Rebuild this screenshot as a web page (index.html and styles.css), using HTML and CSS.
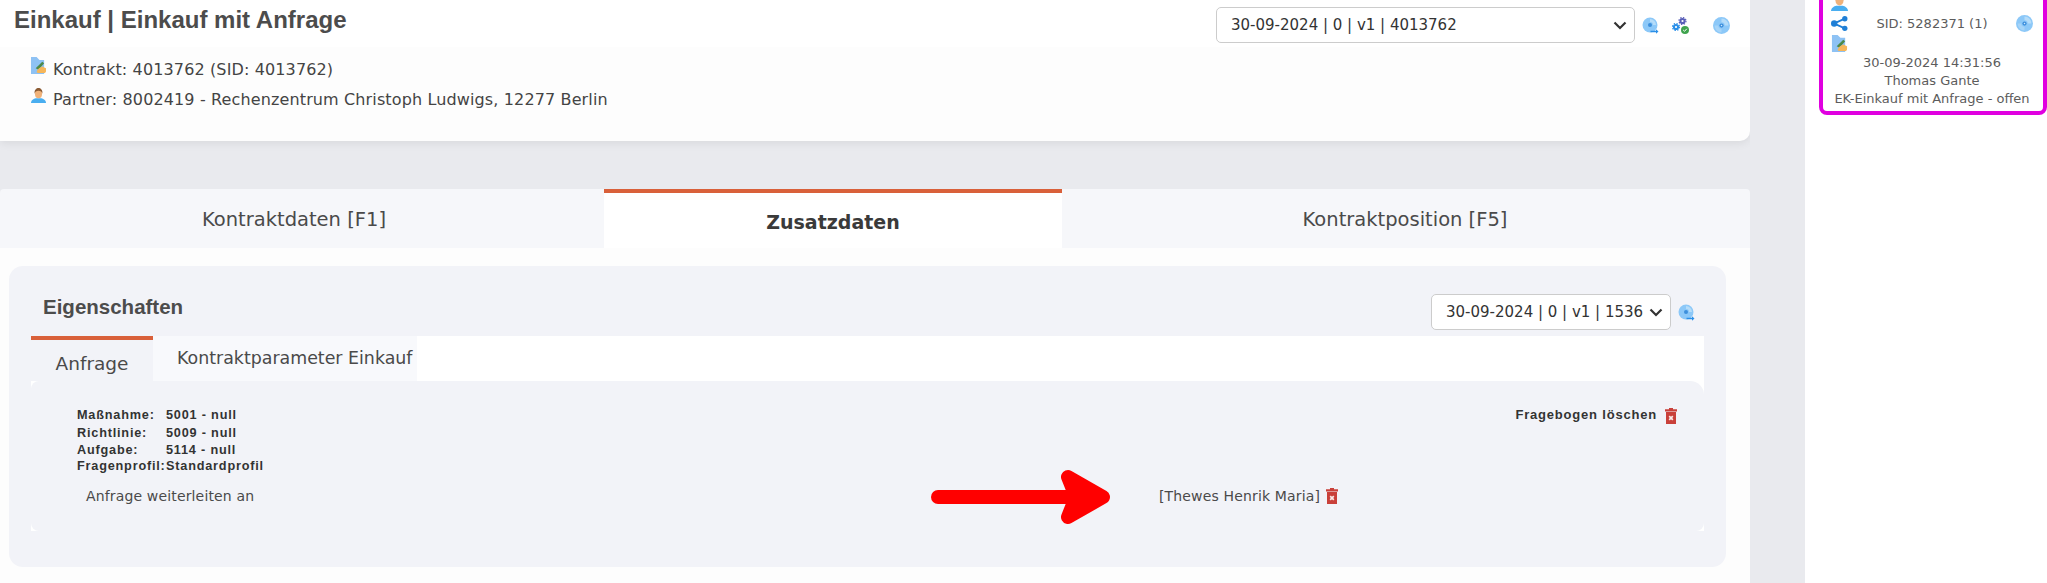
FILE: index.html
```html
<!DOCTYPE html>
<html lang="de">
<head>
    <meta charset="UTF-8">
    <title>Einkauf mit Anfrage</title>
    <link rel="stylesheet" href="styles.css">
</head>
<body>
    <svg class="sprites" width="0" height="0">
        <symbol id="ic-disc" viewBox="0 0 16 16">
            <circle cx="8" cy="8" r="8" fill="#8cc8f8"/>
            <path d="M8 1.500a6.500 6.500 0 0 1 6.500 6.500h-3.500a3 3 0 0 0-3-3z" fill="#b5dcf9"/>
            <path d="M8 14.500a6.500 6.500 0 0 1-6.500-6.500h3.500a3 3 0 0 0 3 3z" fill="#a6d4f8"/>
            <circle cx="8" cy="8" r="2" fill="#3d8fdc"/>
            <circle cx="8" cy="8" r=".7" fill="#cfe8fb"/>
        </symbol>
        <symbol id="ic-disc-go" viewBox="0 0 16 17">
            <circle cx="7.500" cy="8" r="7.500" fill="#8cc8f8"/>
            <path d="M7.500 2a6 6 0 0 1 6 6h-3a3 3 0 0 0-3-3z" fill="#b5dcf9"/>
            <circle cx="7.500" cy="8" r="2" fill="#3d8fdc"/>
            <path d="M8 13.700h5.500v-1.500l2.500 2.300-2.500 2.200v-1.500H8z" fill="#2a8fe8"/>
        </symbol>
        <symbol id="ic-gears" viewBox="0 0 17 17">
            <circle cx="10.500" cy="4" r="2.100" fill="none" stroke="#5a5fb8" stroke-width="2"/>
            <circle cx="10.500" cy="4" r="3.500" fill="none" stroke="#5a5fb8" stroke-width="1.200" stroke-dasharray="1.400 1.350"/>
            <circle cx="4" cy="10" r="2.100" fill="none" stroke="#2a8fe8" stroke-width="2"/>
            <circle cx="4" cy="10" r="3.500" fill="none" stroke="#2a8fe8" stroke-width="1.200" stroke-dasharray="1.400 1.350"/>
            <circle cx="13" cy="13" r="4" fill="#3fa34d"/>
            <path d="M11.200 13l1.300 1.300 2.300-2.500" fill="none" stroke="#fff" stroke-width="1"/>
        </symbol>
        <symbol id="ic-contract" viewBox="0 0 16 18">
            <path d="M0 0h6l3 3h5v15H0z" fill="#8ec2f4"/>
            <path d="M5 12l7-7 2 1.500-6 7z" fill="#4d8a4a"/>
            <path d="M6 16c1-4 4-5 6-6l4 2v3c0 1-1 2-2 2H7z" fill="#f6b65a"/>
        </symbol>
        <symbol id="ic-person" viewBox="0 0 16 16">
            <path d="M0 16c0-3 3-4.500 5-5h6c2 .5 5 2 5 5z" fill="#49aef0"/>
            <ellipse cx="8" cy="6" rx="3.800" ry="4.800" fill="#f0b27a"/>
            <path d="M4 6c-1-4 2-6 4-6s5 2 4 6c-.5-2-1.500-3-4-3S4.500 4 4 6z" fill="#8a5a32"/>
        </symbol>
        <symbol id="ic-trash" viewBox="0 0 12 16">
            <path d="M4 0h4v1.200h4V3.500H0V1.200h4z" fill="#c9403a"/>
            <path d="M1 4h10v12H1z" fill="#c9403a"/>
            <path d="M4.200 8.200l3.600 3.600M7.800 8.200l-3.600 3.600" stroke="#fbe9e7" stroke-width="1.700"/>
        </symbol>
        <symbol id="ic-share" viewBox="0 0 16 14">
            <path d="M13 2.500 3 7l10 4.500" fill="none" stroke="#1f7fd6" stroke-width="1.800"/>
            <circle cx="13" cy="2.500" r="2.500" fill="#1f7fd6"/>
            <circle cx="3" cy="7" r="3" fill="#1f7fd6"/>
            <circle cx="13" cy="11.500" r="2.500" fill="#1f7fd6"/>
        </symbol>
    </svg>

    <div class="page">
        <div class="main">
            <!-- Kopf -->
            <div class="head-card">
                <div class="head-top">
                    <h1>Einkauf | Einkauf mit Anfrage</h1>
                    <div class="version-box">
                        <select class="version-select wide">
                            <option>30-09-2024 | 0 | v1 | 4013762</option>
                        </select>
                        <svg class="ic ic-first"><use href="#ic-disc-go"/></svg>
                        <svg class="ic ic-gear"><use href="#ic-gears"/></svg>
                        <svg class="ic ic-last"><use href="#ic-disc"/></svg>
                    </div>
                </div>
                <div class="head-info">
                    <div class="info-row"><svg class="ic-info"><use href="#ic-contract"/></svg>Kontrakt: 4013762 (SID: 4013762)</div>
                    <div class="info-row"><svg class="ic-info"><use href="#ic-person"/></svg>Partner: 8002419 - Rechenzentrum Christoph Ludwigs, 12277 Berlin</div>
                </div>
            </div>

            <!-- Reiter -->
            <div class="tabs">
                <div class="tab tab-first">Kontraktdaten [F1]</div>
                <div class="tab active">Zusatzdaten</div>
                <div class="tab">Kontraktposition [F5]</div>
            </div>

            <div class="tab-body">
                <div class="panel">
                    <div class="panel-head">
                        <h2>Eigenschaften</h2>
                        <div class="version-box small">
                            <select class="version-select narrow">
                                <option>30-09-2024 | 0 | v1 | 1536</option>
                            </select>
                            <svg class="ic ic-first"><use href="#ic-disc-go"/></svg>
                        </div>
                    </div>
                    <div class="sub-tabs">
                        <div class="sub-tab active">Anfrage</div>
                        <div class="sub-tab">Kontraktparameter Einkauf</div>
                    </div>
                    <div class="sub-body">
                        <div class="sub-inner">
                            <div class="sub-top">
                                <div class="meta">
                                    <span>Maßnahme:</span><span>5001 - null</span>
                                    <span>Richtlinie:</span><span>5009 - null</span>
                                    <span>Aufgabe:</span><span>5114 - null</span>
                                    <span>Fragenprofil:</span><span>Standardprofil</span>
                                </div>
                                <div class="delete-form">Fragebogen löschen<svg class="ic-trash"><use href="#ic-trash"/></svg></div>
                            </div>
                            <div class="forward">
                                <span class="forward-label">Anfrage weiterleiten an</span>
                                <span class="forward-name">[Thewes Henrik Maria]<svg class="ic-trash"><use href="#ic-trash"/></svg></span>
                            </div>
                        </div>
                        <svg class="red-arrow" viewBox="0 0 190 62" width="190" height="62">
                            <path d="M14 28H160" stroke="#ff0000" stroke-width="14" stroke-linecap="round"/>
                            <path d="M144 8 179 28 144 48 152 28z" fill="#ff0000" stroke="#ff0000" stroke-width="14" stroke-linejoin="round"/>
                        </svg>
                    </div>
                </div>
            </div>
        </div>

        <div class="gutter"></div>

        <div class="side">
            <div class="history-card">
                <svg class="ic-side"><use href="#ic-person"/></svg>
                <div class="history-row">
                    <svg class="ic-share"><use href="#ic-share"/></svg>
                    <span>SID: 5282371 (1)</span>
                    <svg class="ic"><use href="#ic-disc"/></svg>
                </div>
                <svg class="ic-side"><use href="#ic-contract"/></svg>
                <div class="history-text first">30-09-2024 14:31:56</div>
                <div class="history-text">Thomas Gante</div>
                <div class="history-text">EK-Einkauf mit Anfrage - offen</div>
            </div>
        </div>
    </div>
</body>
</html>
```

FILE: styles.css
```css
html, body { margin: 0; height: 100%; overflow: hidden; }
body { font-family: "DejaVu Sans", Verdana, sans-serif; color: #4a4a4a; background: #fff; }
.sprites { position: absolute; }
.page { display: flex; height: 583px; }

.main { width: 1750px; background: #e9eaee; display: flex; flex-direction: column; }
.gutter { width: 55px; background: #e9eaee; }
.side { flex: 1; background: #fff; padding-left: 14px; overflow: hidden; }

/* Kopf */
.head-card {
    height: 141px;
    background: #fdfdfd;
    border-radius: 0 0 10px 0;
    box-shadow: 0 2px 10px rgba(0,0,0,0.08);
}
.head-top {
    height: 47px;
    padding: 0 20px 0 14px;
    background: #fff;
    display: flex;
    justify-content: space-between;
}
h1 {
    margin: 7px 0 0;
    font: bold 24px "Liberation Sans", Arial, sans-serif;
    line-height: 26px;
    color: #4c4c4c;
}
.version-box { display: flex; align-items: center; height: 36px; margin-top: 7px; }
.version-select {
    appearance: none;
    height: 36px;
    padding: 0 25px 0 14px;
    border: 1px solid #ccc;
    border-radius: 5px;
    background-color: #fff;
    background-image: url("data:image/svg+xml,%3Csvg xmlns='http://www.w3.org/2000/svg' width='14' height='9'%3E%3Cpath d='M1.500 1.500 7 7l5.500-5.500' fill='none' stroke='%23333' stroke-width='2.200'/%3E%3C/svg%3E");
    background-repeat: no-repeat;
    background-position: right 7px center;
    font-family: "DejaVu Sans", Verdana, sans-serif;
    font-size: 15px;
    color: #333;
}
.version-select.wide { width: 419px; }
.version-select.narrow { width: 240px; }
.ic { width: 17px; height: 17px; flex: none; }
.ic-first { margin-left: 7px; }
.ic-gear { margin-left: 13px; }
.ic-last { margin-left: 24px; }

.head-info { padding: 9px 0 0 31px; font-size: 16px; letter-spacing: 0.13px; color: #444; }
.info-row { display: flex; align-items: flex-start; height: 30px; line-height: 28px; }
.ic-info { width: 15px; height: 17px; margin: 1px 7px 0 0; flex: none; }

/* Reiter */
.tabs {
    display: grid;
    grid-template-columns: 604px 458px 1fr;
    margin-top: 48px;
    height: 59px;
    background: #f6f7fa;
    border-radius: 4px 4px 0 0;
    font-size: 19.5px;
}
.tab { text-align: center; line-height: 62px; color: #4a4a4a; padding-right: 2px; }
.tab-first { padding-right: 16px; }
.tab.active {
    background: #fff;
    border-top: 4px solid #d9603a;
    padding-right: 0;
    line-height: 59px;
    font-size: 19px;
    font-weight: bold;
    color: #3a3a3a;
}
.tab-body { flex: 1; background: #fdfdfd; padding: 18px 24px 16px 9px; }
.panel { height: 301px; background: #f2f3f8; border-radius: 14px; padding: 0 22px; display: flex; flex-direction: column; }
.panel-head { height: 70px; display: flex; justify-content: space-between; padding-left: 12px; }
h2 {
    margin: 28px 0 0;
    font: bold 20.500px "Liberation Sans", Arial, sans-serif;
    line-height: 26px;
    color: #4c4c4c;
}
.version-box.small { margin-top: 28px; margin-right: 9px; }

.sub-tabs { height: 45px; background: #fff; display: flex; }
.sub-tab {
    background: #f8f9fc;
    padding: 0 0 0 24px;
    width: 264px;
    box-sizing: border-box;
    font-size: 17.400px;
    line-height: 44px;
    white-space: nowrap;
    color: #4a4a4a;
}
.sub-tab.active {
    width: 122px;
    background: #f2f3f8;
    border-top: 4px solid #d9603a;
    padding: 0;
    text-align: center;
    font-size: 18.500px;
    line-height: 48px;
}
.sub-body { position: relative; height: 150px; background: #fff; }
.sub-inner { height: 100%; background: #f2f3f8; border-radius: 8px 14px 8px 8px; }
.sub-top { display: flex; justify-content: space-between; padding: 26px 26px 0 46px; }
.meta {
    display: grid;
    grid-template-columns: 89px auto;
    grid-template-rows: 18px 17px 16px 16px;
    font: bold 12.700px "Liberation Sans", Arial, sans-serif;
    letter-spacing: 0.8px;
    line-height: 16px;
    color: #333;
}
.delete-form {
    display: flex;
    align-items: flex-start;
    font: bold 13px "Liberation Sans", Arial, sans-serif;
    letter-spacing: 0.8px;
    color: #333;
    line-height: 16px;
}
.ic-trash { width: 14px; height: 16px; margin: 1px 0 0 7px; flex: none; }
.forward { display: flex; padding: 13px 0 0 55px; font-size: 14px; letter-spacing: 0.15px; color: #4a4a4a; line-height: 18px; }
.forward-label { width: 1073px; flex: none; }
.forward-name { display: flex; }
.forward-name .ic-trash { margin-left: 5px; }
.red-arrow { position: absolute; left: 893px; top: 88px; }

/* Seitenleiste */
.history-card {
    width: 228px;
    height: 135px;
    margin-top: -20px;
    box-sizing: border-box;
    border: 4px solid #e000e0;
    border-radius: 8px;
    padding: 10px 10px 0 8px;
    font-size: 13px;
    color: #5c5c5c;
    line-height: 18px;
}
.ic-side { width: 17px; height: 17px; display: block; }
.ic-share { width: 17px; height: 15px; flex: none; }
.history-row { display: flex; align-items: center; justify-content: space-between; height: 17px; margin: 4px 0 3px; }
.history-text { text-align: center; white-space: nowrap; }
.history-text.first { margin-top: 2px; }
```
